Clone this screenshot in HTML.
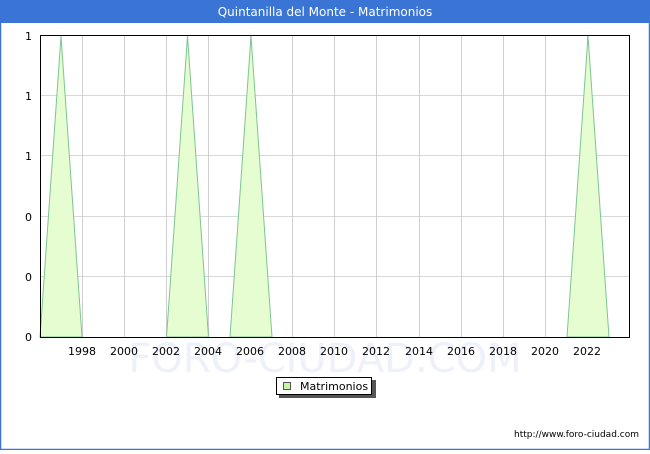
<!DOCTYPE html>
<html><head><meta charset="utf-8"><style>
html,body{margin:0;padding:0;background:#fff;}
body{width:650px;height:450px;overflow:hidden;font-family:"DejaVu Sans","Liberation Sans",sans-serif;}
</style></head><body>
<svg width="650" height="450" xmlns="http://www.w3.org/2000/svg" font-family="DejaVu Sans, Liberation Sans, sans-serif">
<rect x="0.5" y="0.5" width="649" height="449" fill="#fff" stroke="#3a75d6" stroke-width="1.5"/>
<rect x="0" y="0" width="650" height="23" fill="#3a75d6"/>
<text x="325" y="16" fill="#fff" font-size="12" text-anchor="middle">Quintanilla del Monte - Matrimonios</text>
<text x="325" y="372" fill="#eef0fa" font-size="40" text-anchor="middle">FORO-CIUDAD.COM</text>
<g stroke="#d8d8d8" stroke-width="1">
<line x1="40" y1="95.5" x2="630" y2="95.5"/><line x1="40" y1="155.5" x2="630" y2="155.5"/>
<line x1="40" y1="216.5" x2="630" y2="216.5"/><line x1="40" y1="276.5" x2="630" y2="276.5"/>
</g>
<g stroke="#cfcfcf" stroke-width="1">
<line x1="82.5" y1="36" x2="82.5" y2="337"/><line x1="124.5" y1="36" x2="124.5" y2="337"/>
<line x1="166.5" y1="36" x2="166.5" y2="337"/><line x1="208.5" y1="36" x2="208.5" y2="337"/>
<line x1="250.5" y1="36" x2="250.5" y2="337"/><line x1="292.5" y1="36" x2="292.5" y2="337"/>
<line x1="334.5" y1="36" x2="334.5" y2="337"/><line x1="376.5" y1="36" x2="376.5" y2="337"/>
<line x1="419.5" y1="36" x2="419.5" y2="337"/><line x1="461.5" y1="36" x2="461.5" y2="337"/>
<line x1="503.5" y1="36" x2="503.5" y2="337"/><line x1="545.5" y1="36" x2="545.5" y2="337"/>
<line x1="587.5" y1="36" x2="587.5" y2="337"/>
</g>
<g fill="#e6fdd2" stroke="#7cc592" stroke-width="1">
<polygon points="40,337 61,36 82,337"/>
<polygon points="166.5,337 187.5,36 208.5,337"/>
<polygon points="230,337 251,36 272,337"/>
<polygon points="567,337 588,36 609,337"/>
</g>
<rect x="40.5" y="35.5" width="589" height="302" fill="none" stroke="#000" stroke-width="1"/>
<g font-size="11" fill="#000" text-anchor="end">
<text x="32" y="40">1</text><text x="32" y="100">1</text><text x="32" y="160">1</text>
<text x="32" y="221">0</text><text x="32" y="281">0</text><text x="32" y="341">0</text>
</g>
<g font-size="11" fill="#000" text-anchor="middle">
<text x="82" y="355">1998</text><text x="124" y="355">2000</text><text x="166" y="355">2002</text>
<text x="208" y="355">2004</text><text x="250" y="355">2006</text><text x="292" y="355">2008</text>
<text x="334" y="355">2010</text><text x="376" y="355">2012</text><text x="419" y="355">2014</text>
<text x="461" y="355">2016</text><text x="503" y="355">2018</text><text x="545" y="355">2020</text>
<text x="587" y="355">2022</text>
</g>
<rect x="279" y="380" width="97" height="18" fill="#555"/>
<rect x="276.5" y="377.5" width="95" height="17" fill="#fff" stroke="#000"/>
<rect x="283.5" y="382.5" width="7" height="7" fill="#c8f5a0" stroke="#555"/>
<text x="300" y="390" font-size="11">Matrimonios</text>
<text x="639" y="437" font-size="9" text-anchor="end">http://www.foro-ciudad.com</text>
</svg>
</body></html>
